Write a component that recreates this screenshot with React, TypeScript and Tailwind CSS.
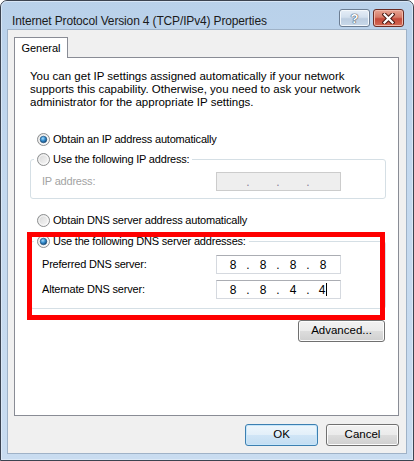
import React from "react";

function Radio({ checked }: { checked?: boolean }) {
  return (
    <svg width="13" height="13" viewBox="0 0 13 13" className="shrink-0">
      <defs>
        <linearGradient id="rdo-fill" x1="0" y1="0" x2="1" y2="1">
          <stop offset="0" stopColor="#d4d4d4" />
          <stop offset="1" stopColor="#fbfbfb" />
        </linearGradient>
        <radialGradient id="rdo-dot" cx="0.4" cy="0.35" r="0.7">
          <stop offset="0" stopColor="#a8dcfb" />
          <stop offset="0.45" stopColor="#3b93d3" />
          <stop offset="1" stopColor="#0d3f6e" />
        </radialGradient>
      </defs>
      <circle cx="6.5" cy="6.5" r="6" fill="url(#rdo-fill)" stroke="#8d8f90" />
      <circle cx="6.5" cy="6.5" r="4.6" fill="none" stroke="#ffffff" strokeOpacity="0.7" />
      {checked && <circle cx="6.5" cy="6.5" r="3.3" fill="url(#rdo-dot)" stroke="#1d4f7c" strokeWidth="0.6" />}
    </svg>
  );
}

function IpField({ parts, disabled, caret }: { parts: string[]; disabled?: boolean; caret?: boolean }) {
  return (
    <div
      className={
        "w-[125px] h-[19px] flex items-center pl-[4px] border text-[12px] tracking-normal " +
        (disabled
          ? "bg-[#eeeeee] border-[#cccccc] text-[#8a7f99]"
          : "bg-white border-[#d5d9df] border-t-[#abadb3] text-black")
      }
    >
      {parts.map((p, i) => (
        <React.Fragment key={i}>
          {i > 0 && <span className="w-[6px] text-center leading-none">.</span>}
          <span className="w-[24px] flex justify-center items-center">
            {p}
            {caret && i === 3 && <span className="inline-block w-[1px] h-[13px] bg-black ml-[1px]" />}
          </span>
        </React.Fragment>
      ))}
    </div>
  );
}

function Button({ label, primary, className }: { label: string; primary?: boolean; className?: string }) {
  return (
    <div
      className={
        "h-[22px] flex items-center justify-center rounded-[3px] border text-[11.5px] tracking-normal text-black " +
        (primary
          ? "border-[#3c7fb1] bg-[linear-gradient(to_bottom,#eef6fc_0%,#e2eff9_50%,#d0e5f6_50%,#c3ddf2_100%)] shadow-[inset_0_0_0_1px_#c6e6fa] "
          : "border-[#707070] bg-[linear-gradient(to_bottom,#f2f2f2_0%,#ebebeb_50%,#dddddd_50%,#cfcfcf_100%)] shadow-[inset_0_0_0_1px_#fcfcfc] ") +
        (className ?? "")
      }
    >
      {label}
    </div>
  );
}

export default function App() {
  return (
    <div className="w-[414px] h-[461px] font-['Liberation_Sans',Arial,sans-serif] text-black">
      <div className="h-full rounded-t-[7px] border border-[#3b4350] bg-[linear-gradient(to_bottom,#b9d1ea,#c4d9ef_40%,#c9dcf0)]">
        <div className="h-full flex flex-col rounded-t-[6px] border border-[#e4eef9]/70">
          {/* title bar */}
          <div className="h-[27px] shrink-0 flex items-start">
            <span className="mt-[11px] ml-[10px] text-[12px] tracking-[-0.15px] leading-[16px] text-[#1b1b1b]">
              Internet Protocol Version 4 (TCP/IPv4) Properties
            </span>
            <div className="ml-auto mt-[7px] mr-[8px] flex gap-[3px]">
              <div className="w-[31px] h-[18px] rounded-[3px] border border-[#6c7d92] bg-[linear-gradient(to_bottom,#e6eef7_0%,#d3e0ee_45%,#bccde0_55%,#c9d9ea_100%)] shadow-[inset_0_0_0_1px_#f4f8fc] flex items-center justify-center">
                <span className="text-[13px] font-bold leading-none text-white [text-shadow:0_0_1px_#3d4b5c,0_0_1px_#3d4b5c,0_0_1px_#3d4b5c]">?</span>
              </div>
              <div className="w-[31px] h-[18px] rounded-[3px] border border-[#6b2c24] bg-[linear-gradient(to_bottom,#e8a594_0%,#d67a68_45%,#c4493a_55%,#d46b55_100%)] shadow-[inset_0_0_0_1px_#f0b8aa] flex items-center justify-center">
                <svg width="13" height="11" viewBox="0 0 13 11">
                  <path d="M2.5 1.5 L10.5 9.5 M10.5 1.5 L2.5 9.5" stroke="#4a1a14" strokeWidth="4.2" strokeLinecap="square" />
                  <path d="M2.5 1.5 L10.5 9.5 M10.5 1.5 L2.5 9.5" stroke="#ffffff" strokeWidth="2.2" strokeLinecap="square" />
                </svg>
              </div>
            </div>
          </div>

          {/* client area */}
          <div className="flex-1 mx-[5px] mb-[5px] border border-[#9fb2c7] bg-[#f0f0f0] flex flex-col">
            {/* tab */}
            <div className="mt-[7px] ml-[6px] w-[54px] h-[21px] -mb-[1px] relative z-10 border border-b-0 border-[#898c95] bg-white flex items-center justify-center text-[11px]">
              General
            </div>

            {/* panel */}
            <div className="relative ml-[6px] w-[385px] h-[359px] border border-[#898c95] bg-white text-[11px] tracking-[-0.2px] flex flex-col">
              <p className="mt-[12px] ml-[15px] text-[11.5px] tracking-normal leading-[13px]">
                You can get IP settings assigned automatically if your network
                <br />
                supports this capability. Otherwise, you need to ask your network
                <br />
                administrator for the appropriate IP settings.
              </p>

              <div className="mt-[23px] ml-[22px] h-[14px] flex items-center gap-[3px]">
                <Radio checked />
                <span>Obtain an IP address automatically</span>
              </div>

              {/* group 1 */}
              <div className="mt-[13px] ml-[15px] mr-[12px] border border-[#d5dfe5] rounded-[3px] flex flex-col">
                <div className="-mt-[8px] ml-[3px] w-fit h-[14px] bg-white pl-[3px] pr-[3px] flex items-center gap-[3px]">
                  <Radio />
                  <span>Use the following IP address:</span>
                </div>
                <div className="mt-[6px] mb-[7px] pl-[11px] pr-[44px] flex items-center">
                  <span className="flex-1 text-[#a3a3a3]">IP address:</span>
                  <IpField parts={["", "", "", ""]} disabled />
                </div>
              </div>

              <div className="mt-[14px] ml-[22px] h-[14px] flex items-center gap-[3px]">
                <Radio />
                <span>Obtain DNS server address automatically</span>
              </div>

              {/* group 2 */}
              <div className="mt-[14px] ml-[15px] mr-[12px] border border-[#d5dfe5] rounded-[3px] flex flex-col">
                <div className="-mt-[8px] ml-[3px] w-fit h-[14px] bg-white pl-[3px] pr-[3px] flex items-center gap-[3px]">
                  <Radio checked />
                  <span>Use the following DNS server addresses:</span>
                </div>
                <div className="mt-[7px] pl-[11px] pr-[44px] flex items-center">
                  <span className="flex-1">Preferred DNS server:</span>
                  <IpField parts={["8", "8", "8", "8"]} />
                </div>
                <div className="mt-[6px] mb-[9px] pl-[11px] pr-[44px] flex items-center">
                  <span className="flex-1">Alternate DNS server:</span>
                  <IpField parts={["8", "8", "4", "4"]} caret />
                </div>
              </div>

              <div className="mt-[11px] mr-[13px] flex justify-end">
                <Button label="Advanced..." className="w-[87px]" />
              </div>

              {/* annotation */}
              <div className="absolute left-[12px] top-[174px] w-[358px] h-[88px] border-[5px] border-[#ff0000]" />
            </div>

            {/* dialog buttons */}
            <div className="mt-[8px] mr-[7px] flex justify-end gap-[8px]">
              <Button label="OK" primary className="w-[73px]" />
              <Button label="Cancel" className="w-[73px]" />
            </div>
          </div>
        </div>
      </div>
    </div>
  );
}
